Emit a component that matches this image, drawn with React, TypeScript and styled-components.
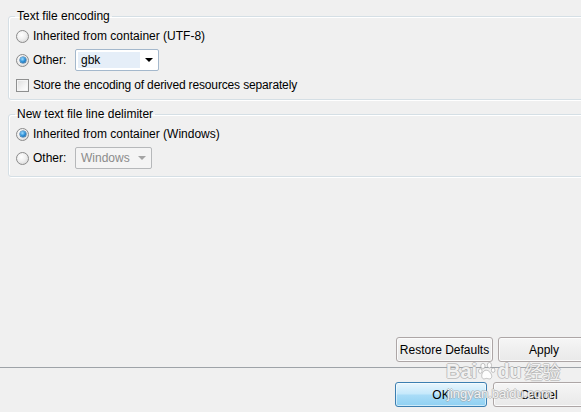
import React from "react";
import styled, { createGlobalStyle } from "styled-components";

const Global = createGlobalStyle`
  html, body { margin: 0; padding: 0; background: #f0f0f0; overflow: hidden; }
  body { width: 581px; height: 412px; font-family: "Liberation Sans", Arial, sans-serif; font-size: 12px; color: #000; }
  #root { width: 581px; height: 412px; overflow: hidden; position: relative; }
`;

const Page = styled.div`
  width: 600px;
  height: 412px;
  display: flex;
  flex-direction: column;
  background: #f0f0f0;
`;

const Group = styled.fieldset<{ $mt: number; $pb: number }>`
  margin: ${(p) => p.$mt}px 0 0 8px;
  padding: 2px 0 ${(p) => p.$pb}px 6px;
  width: 620px;
  border: 1px solid #d5dfe5;
  border-radius: 3px;
  box-shadow: inset 1px 1px 0 #ffffff, 1px 1px 0 #ffffff;
  display: flex;
  flex-direction: column;
`;

const Legend = styled.legend`
  padding: 0 2px;
  font-size: 12px;
  line-height: 15px;
  height: 15px;
`;

const Row = styled.div<{ $h: number; $mt?: number }>`
  height: ${(p) => p.$h}px;
  margin-top: ${(p) => p.$mt ?? 0}px;
  display: flex;
  align-items: center;
  padding-left: 1px;
`;

const Radio = styled.span<{ $on?: boolean }>`
  width: 11px;
  height: 11px;
  border-radius: 50%;
  border: 1px solid #8b8b8b;
  background: radial-gradient(circle at 40% 35%, #ffffff 0%, #f0f0f0 45%, #cfcfcf 100%);
  display: flex;
  align-items: center;
  justify-content: center;
  flex: none;
  &::after {
    content: "";
    display: ${(p) => (p.$on ? "block" : "none")};
    width: 6px;
    height: 6px;
    border-radius: 50%;
    background: radial-gradient(circle at 40% 35%, #9fdcff 0%, #2c8fd6 50%, #0d4f8c 100%);
    box-shadow: 0 0 0 0.5px #1b5c94;
  }
`;

const Check = styled.span`
  width: 11px;
  height: 11px;
  border: 1px solid #8e8f8f;
  background: linear-gradient(135deg, #dcdcdc 0%, #f4f4f4 60%, #ffffff 100%);
  box-shadow: inset 0 0 0 1px #f4f4f4;
  flex: none;
`;

const Label = styled.span<{ $w?: number; $tight?: boolean }>`
  margin-left: 4px;
  white-space: nowrap;
  ${(p) => (p.$w ? `width: ${p.$w}px;` : "")}
  ${(p) => (p.$tight ? "letter-spacing: -0.15px;" : "")}
`;

const Combo = styled.div<{ $w: number; $disabled?: boolean }>`
  width: ${(p) => p.$w}px;
  height: 20px;
  box-sizing: content-box;
  border: 1px solid ${(p) => (p.$disabled ? "#b6b8ba" : "#a4b8cc")};
  border-radius: 2px;
  background: ${(p) => (p.$disabled ? "#f4f4f4" : "#ffffff")};
  display: flex;
  align-items: center;
  padding-left: 2px;
  color: ${(p) => (p.$disabled ? "#8b8b8b" : "#000")};
`;

const ComboText = styled.span<{ $sel?: boolean }>`
  flex: ${(p) => (p.$sel ? "none" : "1")};
  width: ${(p) => (p.$sel ? "62px" : "auto")};
  height: 16px;
  line-height: 16px;
  padding-left: 3px;
  box-sizing: border-box;
  background: ${(p) => (p.$sel ? "#e5eef8" : "transparent")};
`;

const Arrow = styled.span<{ $disabled?: boolean }>`
  margin-left: auto;
  margin-right: 5px;
  width: 0;
  height: 0;
  border-left: 4px solid transparent;
  border-right: 4px solid transparent;
  border-top: 4px solid ${(p) => (p.$disabled ? "#a4a4a4" : "#000")};
`;

const Spacer = styled.div`
  flex: 1;
`;

const ButtonRow = styled.div<{ $pr: number; $gap: number }>`
  height: 25px;
  display: flex;
  justify-content: flex-end;
  gap: ${(p) => p.$gap}px;
  padding-right: ${(p) => p.$pr}px;
`;

const Button = styled.div<{ $w: number; $primary?: boolean }>`
  width: ${(p) => p.$w}px;
  height: 25px;
  box-sizing: border-box;
  border-radius: 3px;
  display: flex;
  align-items: center;
  justify-content: center;
  font-size: 12px;
  border: 1px solid ${(p) => (p.$primary ? "#3c7fb1" : "#ada6a6")};
  background: ${(p) =>
    p.$primary
      ? "linear-gradient(#e9f6fd 0%, #c4e8fb 48%, #a9dcf7 52%, #8fd0f2 100%)"
      : "linear-gradient(#f6f6f6 0%, #efefef 50%, #e9e9e9 100%)"};
  box-shadow: inset 0 0 0 1px ${(p) => (p.$primary ? "rgba(255,255,255,0.55)" : "#fbfbfb")};
`;

const Separator = styled.div`
  height: 1px;
  margin: 5px 0 14px 0;
  background: #9ea3a8;
`;

const Bottom = styled.div`
  padding-bottom: 5px;
`;

const Watermark = styled.div`
  position: absolute;
  left: 446px;
  top: 360px;
  display: flex;
  flex-direction: column;
  align-items: flex-start;
  pointer-events: none;
  white-space: nowrap;
  color: rgba(255, 255, 255, 0.85);
  text-shadow: 1px 0 0 rgba(160, 160, 160, 0.55), -1px 0 0 rgba(160, 160, 160, 0.55),
    0 1px 0 rgba(160, 160, 160, 0.55), 0 -1px 0 rgba(160, 160, 160, 0.55);
  font-family: "Liberation Sans", Arial, "Noto Sans CJK SC", sans-serif;
`;

const Mark = styled.div`
  font-size: 20px;
  font-weight: bold;
  line-height: 22px;
  display: flex;
  align-items: center;
  white-space: nowrap;
`;

const MarkCn = styled.span`
  margin-left: 3px;
  font-weight: normal;
  font-size: 18px;
  font-family: "Noto Sans CJK SC", sans-serif;
`;

const MarkSub = styled.div`
  font-size: 13px;
  line-height: 14px;
  margin-top: 5px;
  margin-left: 1px;
`;

const Paw = () => (
  <svg width="18" height="20" viewBox="0 0 22 24" style={{ margin: "0 1px" }}>
    <g fill="rgba(255,255,255,0.85)" stroke="rgba(150,150,150,0.6)" strokeWidth="1.1">
      <ellipse cx="6" cy="6" rx="2.6" ry="3.4" />
      <ellipse cx="14" cy="5" rx="2.6" ry="3.4" />
      <ellipse cx="2.8" cy="12" rx="2.2" ry="2.8" />
      <ellipse cx="18.5" cy="11" rx="2.2" ry="2.8" />
      <path d="M10 11 C6 11 3.5 17 5 20 C6.5 23 9 21 10.5 21 C12 21 15 23 16.5 20 C18 17 14 11 10 11 Z" />
    </g>
  </svg>
);

export default function App() {
  return (
    <>
      <Global />
      <Page>
        <Group $mt={9} $pb={5}>
          <Legend>Text file encoding</Legend>
          <Row $h={20}>
            <Radio />
            <Label>Inherited from container (UTF-8)</Label>
          </Row>
          <Row $h={24} $mt={2}>
            <Radio $on />
            <Label $w={42}>Other:</Label>
            <Combo $w={80}>
              <ComboText $sel>gbk</ComboText>
              <Arrow />
            </Combo>
          </Row>
          <Row $h={18} $mt={4}>
            <Check />
            <Label $tight>Store the encoding of derived resources separately</Label>
          </Row>
        </Group>
        <Group $mt={7} $pb={6}>
          <Legend>New text file line delimiter</Legend>
          <Row $h={20}>
            <Radio $on />
            <Label>Inherited from container (Windows)</Label>
          </Row>
          <Row $h={24} $mt={2}>
            <Radio />
            <Label $w={42}>Other:</Label>
            <Combo $w={73} $disabled>
              <ComboText>Windows</ComboText>
              <Arrow $disabled />
            </Combo>
          </Row>
        </Group>
        <Spacer />
        <Bottom>
          <ButtonRow $pr={10} $gap={5}>
            <Button $w={97}>Restore Defaults</Button>
            <Button $w={92}>Apply</Button>
          </ButtonRow>
          <Separator />
          <ButtonRow $pr={15} $gap={6}>
            <Button $w={92} $primary>OK</Button>
            <Button $w={92}>Cancel</Button>
          </ButtonRow>
        </Bottom>
      </Page>
      <Watermark>
        <Mark>
          Bai
          <Paw />
          du
          <MarkCn>经验</MarkCn>
        </Mark>
        <MarkSub>jingyan.baidu.com</MarkSub>
      </Watermark>
    </>
  );
}
